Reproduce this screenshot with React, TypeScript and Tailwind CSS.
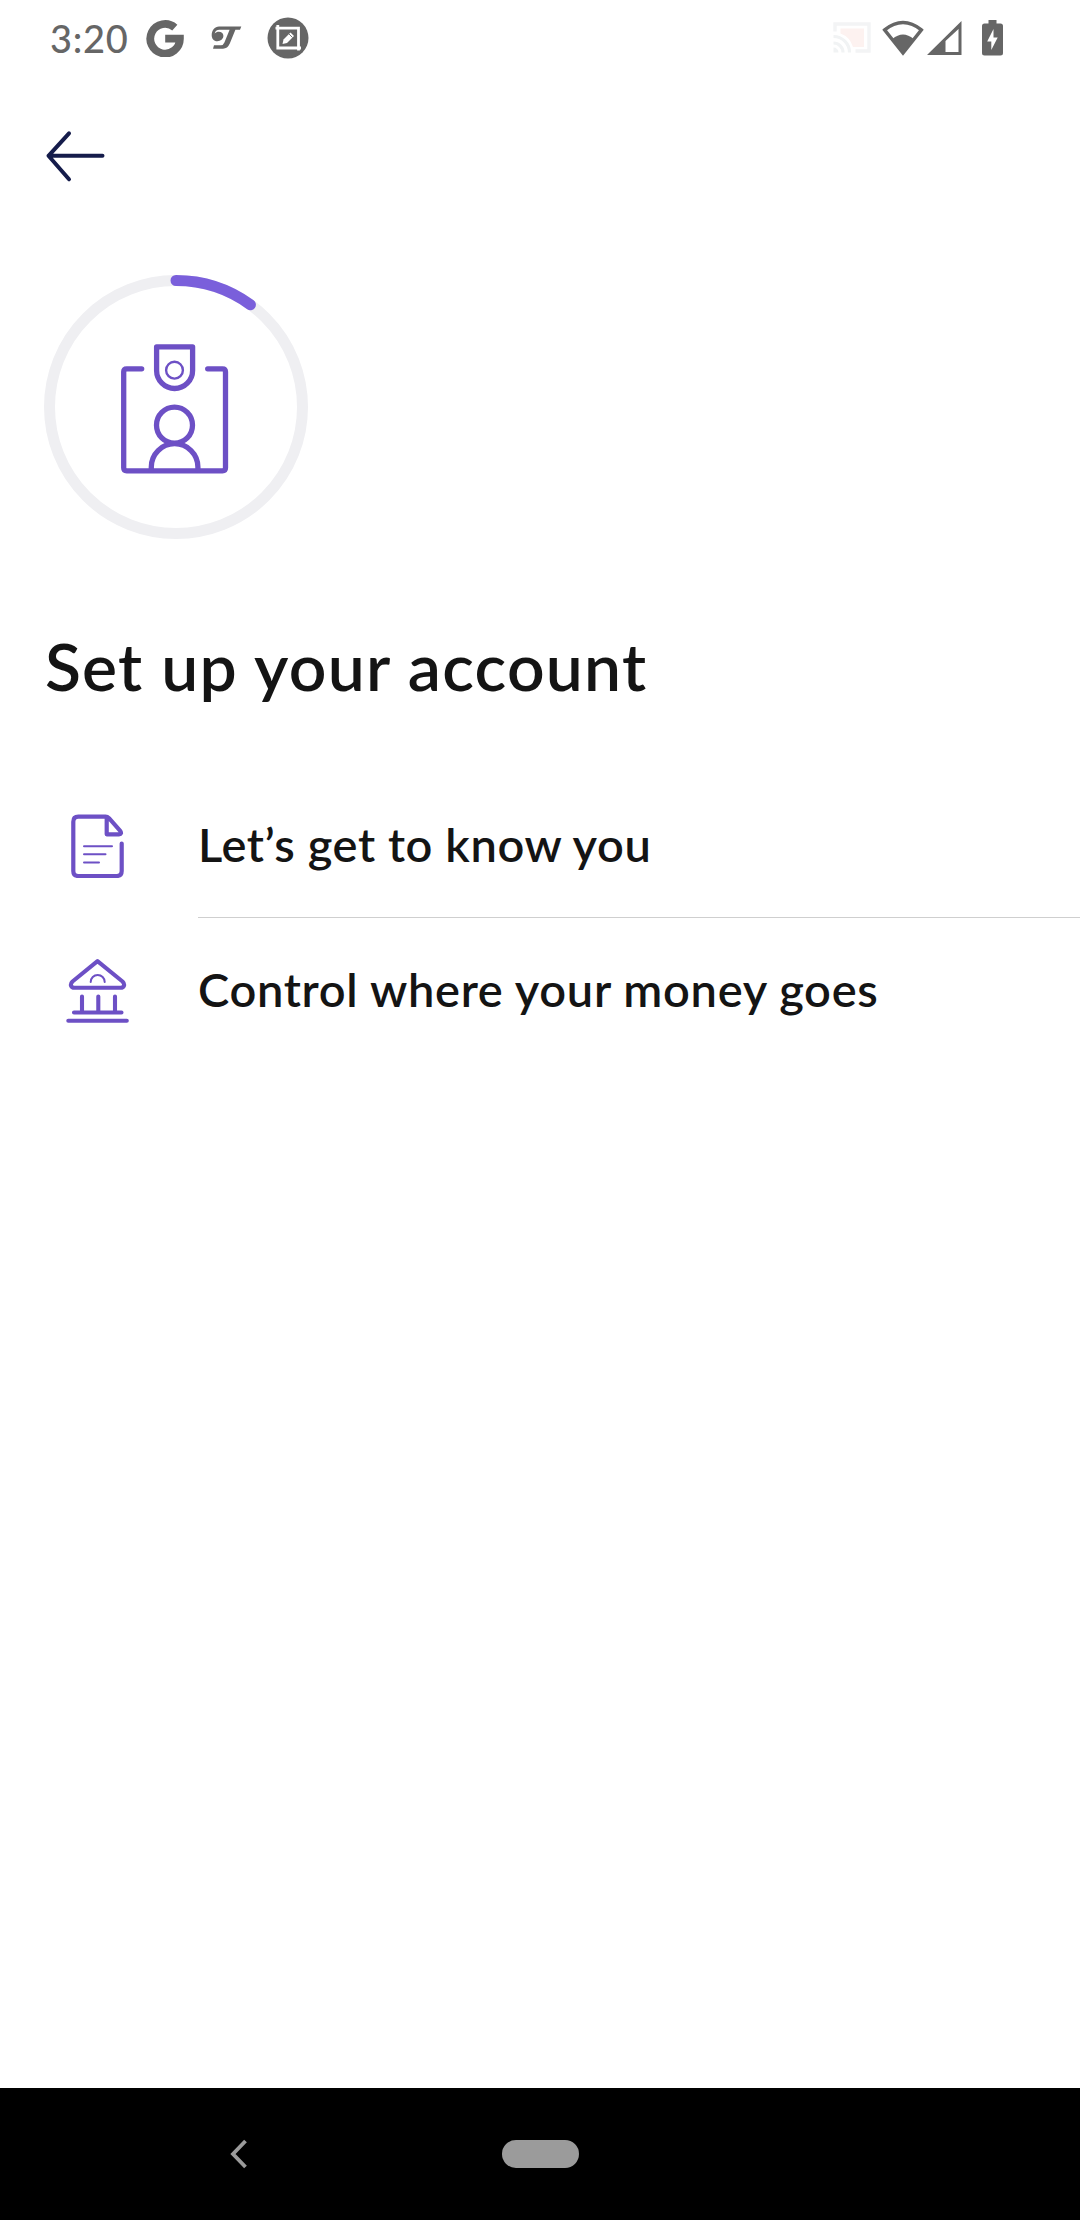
import type { ReactNode } from "react";

function StatusBar() {
  return (
    <header className="flex h-[76px] items-center justify-between pr-[77px] pl-[50px] text-[#666666]">
      <div className="flex items-center">
        <span className="w-[96px] text-[38px] leading-[76px] font-medium tracking-[0.7px]">3:20</span>
        {/* Google */}
        <svg width="38" height="38" viewBox="0 0 38 38" className="shrink-0">
          <path
            d="M28.800 8.600A14.800 14.800 0 1 0 33.900 19.700H19.200"
            fill="none"
            stroke="currentColor"
            strokeWidth="7.800"
          />
        </svg>
        {/* Scripted T badge */}
        <svg width="32" height="24" viewBox="0 0 32 24" className="ml-[27px] shrink-0" fill="currentColor">
          <path d="M8 .4H30.300L29 3.800H24.400L18.800 17.600Q16.500 22.800 12 22.800H2L3 19.300H10Q12.300 19.300 13.400 16.600L18.600 3.800H8.500C5.800 3.800 4 5.500 3.700 7.400C6 4.800 12.400 5 12.400 9.800C12.400 13 9.500 15.200 6.300 15.200C2.800 15.200.7 12.600.7 9.200C.7 4.300 3.800.4 8 .4Z" />
        </svg>
        {/* Screenshot editor */}
        <svg width="42" height="42" viewBox="0 0 42 42" className="ml-[23.500px] shrink-0">
          <circle cx="21" cy="21" r="20.500" fill="currentColor" />
          <path d="M8.500 11.200H31.500V33.500M10.800 8V31H34" fill="none" stroke="#fff" strokeWidth="2.800" />
          <path d="M15.500 27L16.500 22.500L23.500 15.500L27 19L20 26Z" fill="#fff" />
          <path d="M22 17L25.500 20.500" stroke="currentColor" strokeWidth="0.900" />
        </svg>
      </div>
      <div className="flex items-center">
        {/* Cast */}
        <svg width="38" height="32" viewBox="0 0 38 32" className="shrink-0" fill="none">
          <path d="M7.500 6.500H31V25H20Q17 15 7.500 11.500Z" fill="#fdf2f0" />
          <path d="M2 9.500V2H36V29H22.500" stroke="#f3f4f5" strokeWidth="3.400" />
          <path d="M.5 14.500A16 16 0 0 1 16.500 30.500M.5 21A9.500 9.500 0 0 1 10 30.500" stroke="#f1f3f4" strokeWidth="3.200" />
          <path d="M.5 25.500A5 5 0 0 1 5.500 30.500H.5Z" fill="#f1f3f4" />
        </svg>
        {/* Wi-Fi */}
        <svg width="42" height="36" viewBox="0 0 42 36" className="ml-[11px] shrink-0">
          <path d="M2.600 9.900Q21-4.800 39.400 9.900L21 33Z" fill="none" stroke="currentColor" strokeWidth="3.300" />
          <path d="M10.300 19Q21 9.800 31.700 19L21 33Z" fill="currentColor" />
        </svg>
        {/* Mobile signal */}
        <svg width="35" height="34" viewBox="0 0 35 34" className="ml-[3px] shrink-0">
          <path d="M0 34L34.500 0V34ZM18.500 20V31H31.500V8Z" fill="currentColor" fillRule="evenodd" />
        </svg>
        {/* Charging battery */}
        <svg width="21" height="36" viewBox="0 0 21 36" className="ml-[20px] shrink-0">
          <path
            d="M6.500 0H14.500V3.500H18.500Q21 3.500 21 6V33Q21 35.500 18.500 35.500H2.500Q0 35.500 0 33V6Q0 3.500 2.500 3.500H6.500ZM11.500 9L5.200 21.500H9.300V30L15.700 17.500H11.500Z"
            fill="currentColor"
            fillRule="evenodd"
          />
        </svg>
      </div>
    </header>
  );
}

function ProgressBadge() {
  return (
    <svg width="264" height="264" viewBox="0 0 264 264" fill="none" className="block">
      <circle cx="132" cy="132" r="126.500" stroke="#efeff2" strokeWidth="11" />
      <path d="M132 5.500A126.500 126.500 0 0 1 206.400 29.700" stroke="#7a5fdb" strokeWidth="11" strokeLinecap="round" />
      <g stroke="#6d50c5" strokeWidth="5.300" strokeLinecap="round" strokeLinejoin="round">
        <path d="M97.700 93.800H82.700Q79.700 93.800 79.700 96.800V192.800Q79.700 195.800 82.700 195.800H178.500Q181.500 195.800 181.500 192.800V96.800Q181.500 93.800 178.500 93.800H163.700" />
        <path d="M112.600 71.800H148.600V95.500A18 18 0 0 1 112.600 95.500Z" />
        <circle cx="130.500" cy="150.200" r="18" />
        <path d="M107.300 195V192A23.300 23.300 0 0 1 153.900 192V195" />
      </g>
      <circle cx="130.500" cy="95.200" r="8.400" stroke="#6d50c5" strokeWidth="2.400" />
    </svg>
  );
}

function DocumentIcon() {
  return (
    <svg width="68" height="68" viewBox="0 0 68 68" fill="none" stroke="#6d50c5" strokeLinecap="round" strokeLinejoin="round">
      <path
        d="M57.700 33.500V61Q57.700 66 52.700 66H14.300Q9.300 66 9.300 61V11.700Q9.300 6.700 14.300 6.700H41.500Q43.500 6.700 45 8.200L56.200 20.800Q58.300 24.300 55 24.300H42.700V7.500"
        strokeWidth="4.200"
      />
      <path d="M20 36.300H48M20 44.300H41.500M20 52.500H35" strokeWidth="2" />
    </svg>
  );
}

function BankIcon() {
  return (
    <svg width="68" height="68" viewBox="0 0 68 68" fill="none" stroke="#6d50c5" strokeLinecap="round" strokeLinejoin="round">
      <path
        d="M33.500 6.200L8.500 26.500C5.500 29.500 7 32.800 10.500 32.800H56.500C60 32.800 61.500 29.500 58.500 26.500ZM18 41.500V57M34.300 41.500V57M51 41.500V57M10 57.500H57.500M4.300 65.700H62.800"
        strokeWidth="4.100"
      />
      <path d="M26.700 27A7 7 0 0 1 40.700 27" strokeWidth="2" />
    </svg>
  );
}

function Step({ icon, divider, children }: { icon: ReactNode; divider?: boolean; children: ReactNode }) {
  return (
    <li className="flex items-center">
      <div className="flex w-[134px] shrink-0 justify-start pb-[2px]">{icon}</div>
      <div
        className={
          divider
            ? "flex h-[146px] grow items-center border-b border-[#cfcfcf]"
            : "flex h-[144px] grow items-center border-b border-transparent"
        }
      >
        {children}
      </div>
    </li>
  );
}

export default function App() {
  return (
    <div className="flex h-[2220px] w-[1080px] flex-col overflow-hidden bg-white font-['Lato',sans-serif] text-[#141414]">
      <StatusBar />
      <main className="grow">
        <button aria-label="Back" className="mt-[52px] ml-[44px] block">
          <svg width="64" height="56" viewBox="0 0 64 56" fill="none" className="block">
            <path
              d="M25 5.300L4.500 27.800L25 51.300M4.500 27.800H58.500"
              stroke="#151c4b"
              strokeWidth="4"
              strokeLinecap="round"
              strokeLinejoin="round"
            />
          </svg>
        </button>
        <div className="mt-[90.700px] ml-[44px]">
          <ProgressBadge />
        </div>
        <h1 className="mt-[87.300px] ml-[45px] text-[66px] leading-[80px] font-semibold tracking-[1.250px]">
          Set up your account
        </h1>
        <ul className="mt-[66px] ml-[64px] text-[47px] font-semibold">
          <Step icon={<DocumentIcon />} divider>
            <span className="tracking-[0.600px]">Let’s get to know you</span>
          </Step>
          <Step icon={<BankIcon />}>
            <span className="tracking-[0.700px]">Control where your money goes</span>
          </Step>
        </ul>
      </main>
      <nav className="flex h-[132px] shrink-0 items-center bg-black">
        <svg width="20" height="30" viewBox="0 0 20 30" fill="none" className="ml-[229px]">
          <path d="M16.500 2L4 15L16.500 28" stroke="#9b9b9b" strokeWidth="3.800" />
        </svg>
        <div className="ml-[253px] h-[28px] w-[77px] rounded-full bg-[#9b9b9b]" />
      </nav>
    </div>
  );
}
